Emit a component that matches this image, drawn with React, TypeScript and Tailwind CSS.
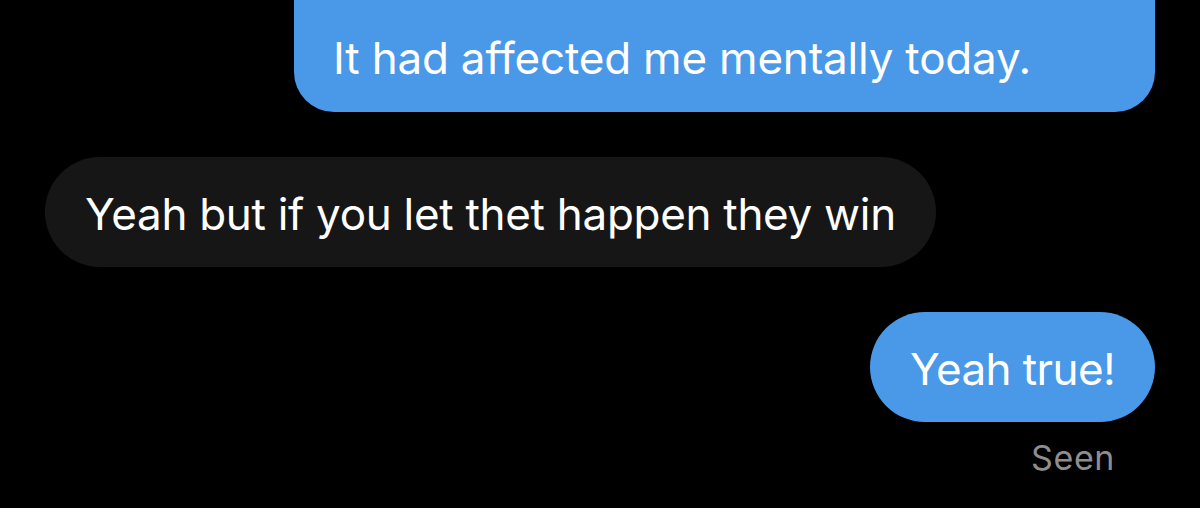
export default function App() {
  return (
    <div
      className="min-h-screen w-full bg-black text-white px-[45px] flex flex-col overflow-hidden"
      style={{ fontFamily: 'Inter, "Noto Sans", sans-serif' }}
    >
      <div className="flex justify-end">
        <div className="bg-[#4a98e8] rounded-b-[40px] pl-[39px] pr-[40px] pt-[30px] pb-[26px] w-[861px] text-[44px] leading-[56px] tracking-[-0.2px]">
          It had affected me mentally today.
        </div>
      </div>

      <div className="flex justify-start mt-[45px]">
        <div className="bg-[#161616] rounded-full px-[40px] pt-[29px] pb-[25px] text-[44px] leading-[56px] tracking-[-0.3px]">
          Yeah but if you let thet happen they win
        </div>
      </div>

      <div className="flex justify-end mt-[45px]">
        <div className="bg-[#4a98e8] rounded-full px-[40px] pt-[29px] pb-[25px] text-[44px] leading-[56px] tracking-[-0.6px]">
          Yeah true!
        </div>
      </div>

      <div className="flex justify-end pr-[40px] mt-[16px] text-[34px] leading-[40px] tracking-[0.6px] text-[#8e8e8e]">
        Seen
      </div>
    </div>
  );
}
